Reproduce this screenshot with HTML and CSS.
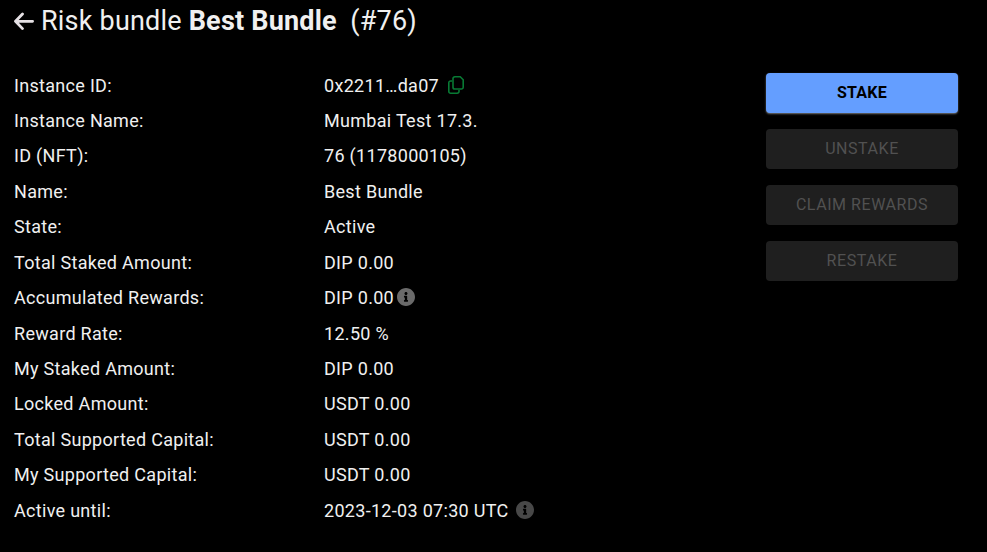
FILE: index.html
```html
<!DOCTYPE html>
<html lang="en">
<head>
<meta charset="utf-8">
<title>Risk bundle</title>
<link rel="stylesheet" href="styles.css">
</head>
<body>
<header class="title">
<svg class="back" viewBox="0 0 20 20"><path d="M8.500 3L1.500 10.300l7 7.300M2 10.300h16.600"/></svg>
<h1>Risk bundle <b>Best Bundle</b><span class="num">(#76)</span></h1>
</header>
<main class="content">
<dl class="details">
<dt>Instance ID:</dt><dd>0x2211…da07<svg class="copy" viewBox="0 0 16 18"><path d="M6.800.8h5.400l3 3v7.400a1.800 1.800 0 0 1-1.800 1.800H6.800A1.800 1.800 0 0 1 5 11.200V2.600A1.800 1.800 0 0 1 6.800.8zM4 5H2.600A1.800 1.800 0 0 0 .8 6.800v8.600a1.800 1.800 0 0 0 1.800 1.800h6.600a1.800 1.800 0 0 0 1.800-1.800V14"/></svg></dd>
<dt>Instance Name:</dt><dd>Mumbai Test 17.3.</dd>
<dt>ID (NFT):</dt><dd>76 (1178000105)</dd>
<dt>Name:</dt><dd>Best Bundle</dd>
<dt>State:</dt><dd>Active</dd>
<dt>Total Staked Amount:</dt><dd>DIP 0.00</dd>
<dt>Accumulated Rewards:</dt><dd>DIP 0.00<svg class="info light" viewBox="8 8 496 496"><path d="M256 8C119.043 8 8 119.083 8 256c0 136.997 111.043 248 248 248s248-111.003 248-248C504 119.083 392.957 8 256 8zm0 110c23.196 0 42 18.804 42 42s-18.804 42-42 42-42-18.804-42-42 18.804-42 42-42zm56 254c0 6.627-5.373 12-12 12h-88c-6.627 0-12-5.373-12-12v-24c0-6.627 5.373-12 12-12h12v-64h-12c-6.627 0-12-5.373-12-12v-24c0-6.627 5.373-12 12-12h64c6.627 0 12 5.373 12 12v100h12c6.627 0 12 5.373 12 12v24z"/></svg></dd>
<dt>Reward Rate:</dt><dd>12.50 %</dd>
<dt>My Staked Amount:</dt><dd>DIP 0.00</dd>
<dt>Locked Amount:</dt><dd>USDT 0.00</dd>
<dt>Total Supported Capital:</dt><dd>USDT 0.00</dd>
<dt>My Supported Capital:</dt><dd>USDT 0.00</dd>
<dt>Active until:</dt><dd>2023-12-03 07:30 UTC<svg class="info dim" viewBox="8 8 496 496"><path d="M256 8C119.043 8 8 119.083 8 256c0 136.997 111.043 248 248 248s248-111.003 248-248C504 119.083 392.957 8 256 8zm0 110c23.196 0 42 18.804 42 42s-18.804 42-42 42-42-18.804-42-42 18.804-42 42-42zm56 254c0 6.627-5.373 12-12 12h-88c-6.627 0-12-5.373-12-12v-24c0-6.627 5.373-12 12-12h12v-64h-12c-6.627 0-12-5.373-12-12v-24c0-6.627 5.373-12 12-12h64c6.627 0 12 5.373 12 12v100h12c6.627 0 12 5.373 12 12v24z"/></svg></dd>
</dl>
<div class="actions">
<button class="primary">STAKE</button>
<button disabled>UNSTAKE</button>
<button disabled>CLAIM REWARDS</button>
<button disabled>RESTAKE</button>
</div>
</main>
</body>
</html>
```
FILE: styles.css
```css
* { box-sizing: border-box; }
body { margin: 0; padding: 0 29px 0 14px; height: 552px; overflow: hidden; background: #000; color: #f0f0f0; font-family: Roboto, "Liberation Sans", sans-serif; }
.title { display: flex; align-items: center; height: 42px; }
.back { width: 20px; height: 20px; fill: none; stroke: #e6e1e5; stroke-width: 2.8; stroke-linecap: round; stroke-linejoin: round; margin-right: 7px; }
h1 { margin: 0; font-size: 27px; font-weight: 400; line-height: 42px; letter-spacing: 0.2px; white-space: nowrap; }
h1 b { font-weight: 700; }
.num { margin-left: 13.5px; }
.content { display: flex; justify-content: space-between; padding-top: 25.64px; }
.details { display: grid; grid-template-columns: 310px 400px; grid-auto-rows: 35.43px; margin: 0; font-size: 18px; letter-spacing: 0.3px; line-height: 35.43px; }
dt, dd { margin: 0; white-space: nowrap; }
dd { display: flex; align-items: center; }
svg { flex: none; }
.copy { width: 16px; height: 18px; margin-left: 9px; margin-bottom: 1px; fill: none; stroke: #087a34; stroke-width: 1.6; }
.info { width: 18px; height: 18px; margin-bottom: 1px; }
.light { margin-left: 3px; fill: #6a6a6a; }
.dim { margin-left: 7.8px; fill: #484848; }
.actions { display: flex; flex-direction: column; gap: 16px; width: 192px; padding-top: 5.36px; }
button { height: 40px; border: 0; border-radius: 4px; padding: 0 0 1px; background: #1f1f1f; color: #515151; font: 400 16px Roboto, sans-serif; letter-spacing: 0.55px; }
.primary { background: #649eff; color: #000; font-weight: 700; letter-spacing: 0.25px; box-shadow: 0 1px 2px rgba(255,255,255,.45); }
```
